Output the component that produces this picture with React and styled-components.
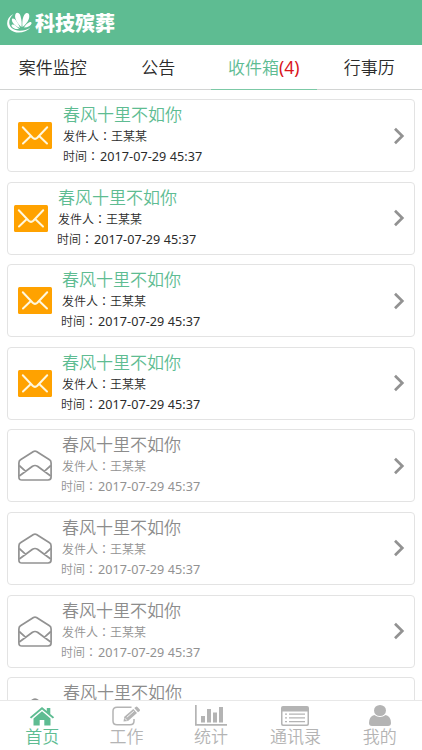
import styled, { createGlobalStyle } from "styled-components";

const GlobalStyle = createGlobalStyle`
    * {
        box-sizing: border-box;
    }

    body {
        margin: 0;
        background: #fff;
        font-family: "Noto Sans", "Noto Sans CJK SC", sans-serif;
    }
`;

const Screen = styled.div`
    display: flex;
    flex-direction: column;
    height: 750px;
    overflow: hidden;
`;

const Header = styled.header`
    flex: none;
    display: flex;
    align-items: center;
    gap: 3px;
    height: 45px;
    padding: 0 6px 0 7px;
    background: #5ebc92;
    color: #fff;
`;

const Brand = styled.div`
    font-family: "Noto Sans CJK SC", sans-serif;
    font-size: 20px;
    font-weight: 900;
    line-height: 45px;
    white-space: nowrap;
`;

const Tabs = styled.nav`
    flex: none;
    display: grid;
    grid-template-columns: repeat(4, 1fr);
    height: 45px;
`;

const Tab = styled.div`
    height: 45px;
    border-bottom: 1px solid ${props => props.$active ? "#7cc9a6" : "#d2d4d3"};
    color: ${props => props.$active ? "#5ebc92" : "#2b2b2b"};
    font-size: 17px;
    font-weight: 350;
    line-height: 45px;
    text-align: center;
    white-space: nowrap;
`;

const Count = styled.span`
    color: #d9151b;
    font-size: 17.5px;
    font-weight: 400;
`;

const List = styled.main`
    flex: 1;
    min-height: 0;
    display: flex;
    flex-direction: column;
    gap: 9.6px;
    padding: 9px 7px 0;
    overflow: hidden;
`;

const Card = styled.article`
    flex: none;
    display: flex;
    align-items: center;
    height: 73px;
    padding: 0 9px 0 ${props => 10 + props.$shift}px;
    border: 1px solid #e3e3e3;
    border-radius: 4px;
`;

const Body = styled.div`
    flex: 1;
    align-self: flex-start;
    padding-left: ${props => props.$indent}px;
    color: ${props => props.$read ? "#929292" : "#2b2b2b"};
    white-space: nowrap;
`;

const Title = styled.div`
    margin-top: 3px;
    color: ${props => props.$read ? "#8c8c8c" : "#5ebc92"};
    font-size: 17px;
    font-weight: 350;
    line-height: 24px;
`;

const Line = styled.div`
    margin-top: ${props => props.$pull || 0}px;
    margin-left: ${props => props.$nudge || 0}px;
    font-size: 12px;
    font-weight: 350;
    line-height: 19px;
`;

const Colon = styled.span`
    font-family: "Noto Sans CJK TC", sans-serif;
`;

const Stamp = styled.span`
    margin-left: 1px;
    font-size: 12.6px;
    font-weight: 400;
    letter-spacing: 0.06px;
`;

const TabBar = styled.footer`
    flex: none;
    display: grid;
    grid-template-columns: repeat(5, 1fr);
    height: 50px;
    border-top: 1px solid #e8e8e8;
    background: #fff;
`;

const BarItem = styled.div`
    display: flex;
    flex-direction: column;
    align-items: center;
    padding-top: 4px;
    color: ${props => props.$active ? "#5ebc92" : "#b4b4b4"};
    font-size: 17px;
    font-weight: 350;
    line-height: 22px;
    white-space: nowrap;
`;

const IconSlot = styled.div`
    display: flex;
    align-items: center;
    height: 21px;
`;

const Logo = () => (
    <svg width="25" height="23" viewBox="0 0 25 23" fill="#fff">
        <path d="M14.500 16 C9.500 12 7 6.500 8.500 3 C10 .8 12.500 2 13.500 5 C14.500 8.500 15 12 14.500 16Z" />
        <path d="M15.500 16 C14.800 10 16 4 19 2.300 C22 1.300 23 4.500 21.800 8 C20.500 11.500 18 14 15.500 16Z" />
        <path d="M13 17 C8.500 15.500 5 12 4.800 8.800 C5 6.500 7.500 7.300 9 9.500 C10.800 12 12.300 14.500 13 17Z" />
        <path d="M12 18 C9 18.500 5.500 17.300 4.500 15 C4.200 13.300 6.500 13.200 8.300 14.500 Q10.500 16 12 18Z" />
        <path d="M17 16.500 C18.500 13.500 21.500 11 23.800 11 C25.300 11.500 24.500 13.800 22.500 15 Q20 16.500 17 16.500Z" />
        <path d="M6.500 3 C-.5 6.500 -1.800 14 3 18.500 C8 23.200 18.500 22.500 23.500 16.500 C18 20.300 9.500 21 5 17.300 C.8 13.500 1.500 7.500 6.500 3Z" />
    </svg>
);

const ClosedMail = () => (
    <svg width="34" height="27" viewBox="0 0 34 27" fill="none">
        <rect width="34" height="27" rx="1.500" fill="#ffa200" />
        <path
            d="M4.800 5.200 L14.700 15.800 Q17 18 19.300 15.800 L29.200 5.200 M5 21.500 L12.800 14 M29 21.500 L21.200 14"
            stroke="#fff8df"
            strokeWidth="2"
            strokeLinecap="round"
        />
    </svg>
);

const OpenMail = () => (
    <svg width="34" height="31" viewBox="0 0 34 31" fill="none" stroke="#929292" strokeWidth="1.700" strokeLinejoin="round">
        <path d="M.9 13 Q.9 10.800 2.500 9.800 L15.500 1.500 Q17 .6 18.500 1.500 L31.500 9.800 Q33.100 10.800 33.100 13 V27 Q33.100 30 30 30 H4 Q.9 30 .9 27Z" />
        <path d="M1.200 15.500 L7.700 21.300 M32.800 15.500 L26.300 21.300 M1.300 26 L14.500 16.300 Q17 14.700 19.500 16.300 L32.700 26" />
    </svg>
);

const Chevron = () => (
    <svg width="12" height="18" viewBox="0 0 12 18" fill="none" stroke="#929292" strokeWidth="2.700">
        <path d="M2 1.700 L9.300 9 L2 16.300" />
    </svg>
);

const HomeIcon = () => (
    <svg width="26" height="20" viewBox="0 0 26 20" fill="currentColor">
        <path d="M13 5.200 L21.500 12.400 V19.500 H15.300 V14 H10.700 V19.500 H4.500 V12.400Z" />
        <path d="M13 1 L17.800 5 V2 H21.300 V8 L25.200 11.200 L23.800 12.600 L13 3.600 L2.200 12.600 L.8 11.200Z" />
    </svg>
);

const EditIcon = () => (
    <svg width="29" height="20" viewBox="0 0 29 20" fill="none" stroke="currentColor">
        <path d="M19.500 1.200 H5 Q1 1.200 1 5 V15 Q1 18.800 5 18.800 H18 Q22 18.800 22 15 V13" strokeWidth="1.500" />
        <path d="M11.500 15.500 L12.300 10.800 L21.300 3 L25 7 L16 15Z" fill="currentColor" stroke="none" />
        <path d="M22.300 2.100 L24 .7 Q24.800 .2 25.500 1 L27.800 3.500 Q28.400 4.300 27.700 4.900 L26 6.200Z" fill="currentColor" stroke="none" />
        <path d="M14.800 11.300 L21.800 5.200 M12.800 12.200 L14.900 14.500" stroke="#fff" strokeWidth=".9" />
    </svg>
);

const ChartIcon = () => (
    <svg width="32" height="21" viewBox="0 0 32 21" fill="currentColor">
        <path d="M0 0 H1.700 V19 H32 V20.700 H0Z" />
        <path d="M6 11 H10 V17.500 H6Z M12 4 H16 V17.500 H12Z M18 7.500 H22 V17.500 H18Z M24 2 H28 V17.500 H24Z" />
    </svg>
);

const ContactsIcon = () => (
    <svg width="28" height="20" viewBox="0 0 28 20" fill="currentColor">
        <path fillRule="evenodd" d="M2 0 H26 Q28 0 28 2 V18 Q28 20 26 20 H2 Q0 20 0 18 V2 Q0 0 2 0Z M1.500 5.500 V17.500 Q1.500 18.500 2.500 18.500 H25.500 Q26.500 18.500 26.500 17.500 V5.500Z" />
        <path d="M4 7.500 H6 V8.700 H4Z M8 7.500 H24 V8.700 H8Z M4 11.300 H6 V12.500 H4Z M8 11.300 H24 V12.500 H8Z M4 15 H6 V16.300 H4Z M8 15 H24 V16.300 H8Z" />
    </svg>
);

const UserIcon = () => (
    <svg width="22" height="21" viewBox="0 0 22 21" fill="currentColor">
        <ellipse cx="11" cy="5.500" rx="6" ry="5.500" />
        <path d="M5.300 10 Q11 14 16.700 10 Q22 11.500 22 18 Q22 21 19 21 H3 Q0 21 0 18 Q0 11.500 5.300 10Z" />
    </svg>
);

const messages = [
    { id: 1, read: false, shift: 0, indent: 11, nudge: 0 },
    { id: 2, read: false, shift: -4, indent: 10, nudge: -1 },
    { id: 3, read: false, shift: 0, indent: 10, nudge: -1 },
    { id: 4, read: false, shift: 0, indent: 10, nudge: -1 },
    { id: 5, read: true, shift: 0, indent: 10, nudge: -1 },
    { id: 6, read: true, shift: 0, indent: 10, nudge: -1 },
    { id: 7, read: true, shift: 0, indent: 10, nudge: -1 },
    { id: 8, read: true, shift: 0, indent: 11, nudge: -1 },
];

const barItems = [
    { label: "首页", Icon: HomeIcon, active: true },
    { label: "工作", Icon: EditIcon },
    { label: "统计", Icon: ChartIcon },
    { label: "通讯录", Icon: ContactsIcon },
    { label: "我的", Icon: UserIcon },
];

const Message = ({ read, shift, indent, nudge }) => (
    <Card $shift={shift}>
        {read ? <OpenMail /> : <ClosedMail />}
        <Body $read={read} $indent={indent}>
            <Title $read={read}>春风十里不如你</Title>
            <Line $pull={-1}>发件人<Colon>：</Colon>王某某</Line>
            <Line $nudge={nudge}>时间<Colon>：</Colon><Stamp>2017-07-29 45:37</Stamp></Line>
        </Body>
        <Chevron />
    </Card>
);

export default function App() {
    return (
        <Screen>
            <GlobalStyle />
            <Header>
                <Logo />
                <Brand>科技殡葬</Brand>
            </Header>
            <Tabs>
                <Tab>案件监控</Tab>
                <Tab>公告</Tab>
                <Tab $active>收件箱<Count>(4)</Count></Tab>
                <Tab>行事历</Tab>
            </Tabs>
            <List>
                {messages.map(message => <Message key={message.id} {...message} />)}
            </List>
            <TabBar>
                {barItems.map(({ label, Icon, active }) => (
                    <BarItem key={label} $active={active}>
                        <IconSlot><Icon /></IconSlot>
                        {label}
                    </BarItem>
                ))}
            </TabBar>
        </Screen>
    );
}
